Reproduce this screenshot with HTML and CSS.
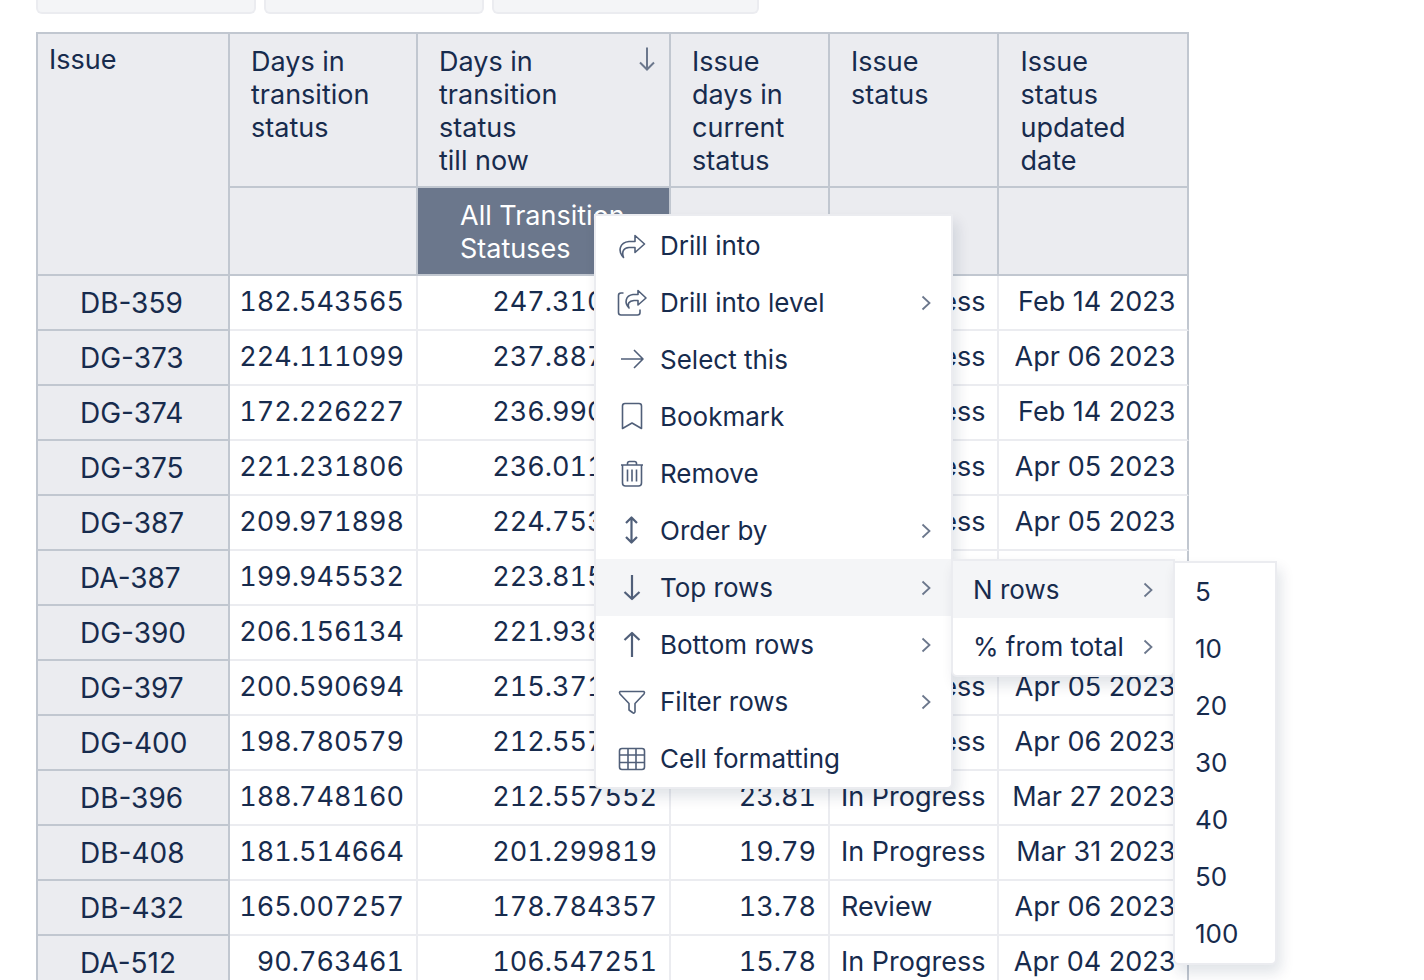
FILE: index.html
```html
<!DOCTYPE html>
<html lang="en">
<head>
  <meta charset="UTF-8">
  <meta name="viewport" content="width=device-width, initial-scale=1.0">
  <title>Issue report</title>
  <link rel="stylesheet" href="styles.css">
</head>
<body>
  <div class="panels">
    <div class="panel"></div>
    <div class="panel"></div>
    <div class="panel wide"></div>
  </div>

  <table class="report">
    <colgroup>
      <col class="c-issue"><col class="c-days"><col class="c-till"><col class="c-current"><col class="c-status"><col class="c-date">
    </colgroup>
    <thead>
      <tr>
        <th class="corner" rowspan="2">Issue</th>
        <th>Days in<br>transition<br>status</th>
        <th>
          <div class="sorted">
            <span>Days in<br>transition<br>status<br>till now</span>
            <svg class="sort" width="18" height="26" viewBox="0 0 18 26"><path d="M9 1.5v22M2 16.500l7 7 7-7"/></svg>
          </div>
        </th>
        <th>Issue<br>days in<br>current<br>status</th>
        <th>Issue<br>status</th>
        <th>Issue<br>status<br>updated<br>date</th>
      </tr>
      <tr>
        <th></th>
        <th class="selected">All Transition<br>Statuses</th>
        <th></th>
        <th></th>
        <th></th>
      </tr>
    </thead>
    <tbody>
      <tr><th>DB-359</th><td class="num">182.543565</td><td class="num">247.310452</td><td class="num">64.77</td><td>In Progress</td><td class="date">Feb 14 2023</td></tr>
      <tr><th>DG-373</th><td class="num">224.111099</td><td class="num">237.887512</td><td class="num">13.78</td><td>In Progress</td><td class="date">Apr 06 2023</td></tr>
      <tr><th>DG-374</th><td class="num">172.226227</td><td class="num">236.990441</td><td class="num">64.76</td><td>In Progress</td><td class="date">Feb 14 2023</td></tr>
      <tr><th>DG-375</th><td class="num">221.231806</td><td class="num">236.011802</td><td class="num">14.78</td><td>In Progress</td><td class="date">Apr 05 2023</td></tr>
      <tr><th>DG-387</th><td class="num">209.971898</td><td class="num">224.753210</td><td class="num">14.78</td><td>In Progress</td><td class="date">Apr 05 2023</td></tr>
      <tr><th>DA-387</th><td class="num">199.945532</td><td class="num">223.815204</td><td class="num">23.87</td><td>In Progress</td><td class="date">Mar 27 2023</td></tr>
      <tr><th>DG-390</th><td class="num">206.156134</td><td class="num">221.938177</td><td class="num">15.78</td><td>In Progress</td><td class="date">Apr 04 2023</td></tr>
      <tr><th>DG-397</th><td class="num">200.590694</td><td class="num">215.371206</td><td class="num">14.78</td><td>In Progress</td><td class="date">Apr 05 2023</td></tr>
      <tr><th>DG-400</th><td class="num">198.780579</td><td class="num">212.557991</td><td class="num">13.78</td><td>In Progress</td><td class="date">Apr 06 2023</td></tr>
      <tr><th>DB-396</th><td class="num">188.748160</td><td class="num">212.557552</td><td class="num">23.81</td><td>In Progress</td><td class="date">Mar 27 2023</td></tr>
      <tr><th>DB-408</th><td class="num">181.514664</td><td class="num">201.299819</td><td class="num">19.79</td><td>In Progress</td><td class="date">Mar 31 2023</td></tr>
      <tr><th>DB-432</th><td class="num">165.007257</td><td class="num">178.784357</td><td class="num">13.78</td><td>Review</td><td class="date">Apr 06 2023</td></tr>
      <tr><th>DA-512</th><td class="num">90.763461</td><td class="num">106.547251</td><td class="num">15.78</td><td>In Progress</td><td class="date">Apr 04 2023</td></tr>
    </tbody>
  </table>

  <svg class="defs" width="0" height="0">
    <symbol id="chevron" viewBox="0 0 10 16"><path d="M1.500 1.500L8.500 8l-7 6.500"/></symbol>
  </svg>

  <ul class="menu main">
    <li><button>
      <svg class="icon" viewBox="0 0 32 32"><path d="M7.500 27.500C1.500 21 3.500 12.500 13 11.500h6V5.500l9.500 8.500-9.500 8.500v-5h-6c-5.500.5-7.500 4-5.500 10z"/></svg>
      <span>Drill into</span></button></li>
    <li><button>
      <svg class="icon" viewBox="0 0 32 32"><path d="M7.500 6H5Q2.500 6 2.500 8.500V25.500Q2.500 28 5 28H21.500Q24 28 24 25.500V22.500"/><path d="M13 21c-5-5-3.500-12.500 4-13.500h5V3.500l8 7.500-8 7v-4.500h-4c-5 .5-7 3-5 7.500z"/></svg>
      <span>Drill into level</span><svg class="chev"><use href="#chevron"/></svg></button></li>
    <li><button>
      <svg class="icon" viewBox="0 0 32 32"><path d="M5 15h22M18 6l9 9-9 9"/></svg>
      <span>Select this</span></button></li>
    <li><button>
      <svg class="icon" viewBox="0 0 32 32"><path d="M6.500 27.500V5Q6.500 2.500 9 2.500H23Q25.500 2.500 25.500 5V27.500L16 22z"/></svg>
      <span>Bookmark</span></button></li>
    <li><button>
      <svg class="icon" viewBox="0 0 32 32"><path d="M5 7h22M11.500 7V5.500q0-2 2-2h5q2 0 2 2v1.500M6.500 7V25Q6.500 28 9.500 28H22.500Q25.500 28 25.500 25V7M11.500 11.500v12M16 11.500v12M20.500 11.500v12"/></svg>
      <span>Remove</span></button></li>
    <li><button>
      <svg class="icon bold" viewBox="0 0 32 32"><path d="M15.500 3v24M10 8l5.500-5.500L21 8M10 22l5.500 5.500L21 22"/></svg>
      <span>Order by</span><svg class="chev"><use href="#chevron"/></svg></button></li>
    <li class="open"><button>
      <svg class="icon bold" viewBox="0 0 32 32"><path d="M16 3v24M8.500 20l7.500 7 7.500-7"/></svg>
      <span>Top rows</span><svg class="chev"><use href="#chevron"/></svg></button>
      <ul class="menu sub">
        <li class="open"><button><span>N rows</span><svg class="chev"><use href="#chevron"/></svg></button>
          <ul class="menu counts">
            <li><button>5</button></li>
            <li><button>10</button></li>
            <li><button>20</button></li>
            <li><button>30</button></li>
            <li><button>40</button></li>
            <li><button>50</button></li>
            <li><button>100</button></li>
          </ul>
        </li>
        <li><button><span>% from total</span><svg class="chev"><use href="#chevron"/></svg></button></li>
      </ul>
    </li>
    <li><button>
      <svg class="icon bold" viewBox="0 0 32 32"><path d="M16 28V4M8.500 11L16 4l7.500 7"/></svg>
      <span>Bottom rows</span><svg class="chev"><use href="#chevron"/></svg></button></li>
    <li><button>
      <svg class="icon" viewBox="0 0 32 32"><path d="M4 5.500H28Q29 6.500 28 8L19 17.500V26q-1 2-2.500.5L13 24V17.500L4 8Q3 6.500 4 5.500z"/></svg>
      <span>Filter rows</span><svg class="chev"><use href="#chevron"/></svg></button></li>
    <li><button>
      <svg class="icon" viewBox="0 0 32 32"><rect x="3.500" y="5.500" width="25" height="21" rx="2.500"/><path d="M3.500 12h25M3.500 19.500h25M12 5.500v21M20 5.500v21"/></svg>
      <span>Cell formatting</span></button></li>
  </ul>
</body>
</html>
```
FILE: styles.css
```css
body { margin: 0; background: #fff; color: #172b4d; font-family: Inter, "Liberation Sans", sans-serif; font-size: 27px; line-height: 33px; overflow: hidden; }

.panels { display: flex; gap: 8px; margin: 0 36px 18px; }
.panel { box-sizing: border-box; width: 220px; height: 14px; background: #f4f5f7; border: 2px solid #ebecf0; border-top: none; border-radius: 0 0 6px 6px; }
.panel.wide { width: 267px; }

.report { margin-left: 36px; border-collapse: separate; border-spacing: 0; border-left: 2px solid #c1c7d0; border-top: 2px solid #c1c7d0; }
.report th, .report td { box-sizing: border-box; border-right: 2px solid #ebecf0; border-bottom: 2px solid #ebecf0; white-space: nowrap; }
.report th { padding: 11px 10px 9px 21px; background: #ebecf0; border-color: #c1c7d0; font-weight: normal; text-align: left; vertical-align: top; }
.report td { padding: 9px 12px 11px 11px; }
.report td:last-child { border-right-color: #c1c7d0; }
.report .corner { padding: 9px 11px; }
.report .selected { padding-left: 42px; background: #6b778c; color: #fff; }
.report tbody th { padding-left: 42px; font-size: 28px; }
.report .num { padding-left: 8px; text-align: right; font-variant-numeric: tabular-nums; }
.report .date { padding-left: 8px; text-align: right; }
.c-issue { width: 192px; }
.c-days { width: 188px; }
.c-till { width: 253px; }
.c-current { width: 159px; }
.c-status { width: 169px; }
.c-date { width: 190px; }
.sorted { display: flex; justify-content: space-between; }
.sort { margin-top: 1px; margin-right: 3px; fill: none; stroke: #6b778c; stroke-width: 2; }

.menu { position: absolute; box-sizing: border-box; margin: 0; padding: 0; list-style: none; background: #fff; border: 2px solid #ebecf0; border-radius: 0 0 6px 6px; box-shadow: 4px 8px 14px rgba(9, 30, 66, 0.12); }
.menu li { position: relative; }
.menu button { display: flex; align-items: center; width: 100%; height: 57px; padding: 0 20px; border: none; background: none; color: inherit; font: inherit; font-size: 26px; text-align: left; white-space: nowrap; }
.menu .open > button { background: #f4f5f7; }
.menu .menu { left: 100%; top: 0; }
.main { left: 594px; top: 214px; width: 359px; padding-top: 1px; }
.sub { width: 224px; }
.counts { width: 104px; padding-bottom: 1px; }
.icon { width: 32px; height: 32px; margin-right: 12px; fill: none; stroke: #505f79; stroke-width: 1.6; stroke-linejoin: round; }
.icon.bold { stroke-width: 2.2; }
.chev { width: 10px; height: 16px; margin-left: auto; fill: none; stroke: #6b778c; stroke-width: 1.8; }
.defs { position: absolute; }
```
